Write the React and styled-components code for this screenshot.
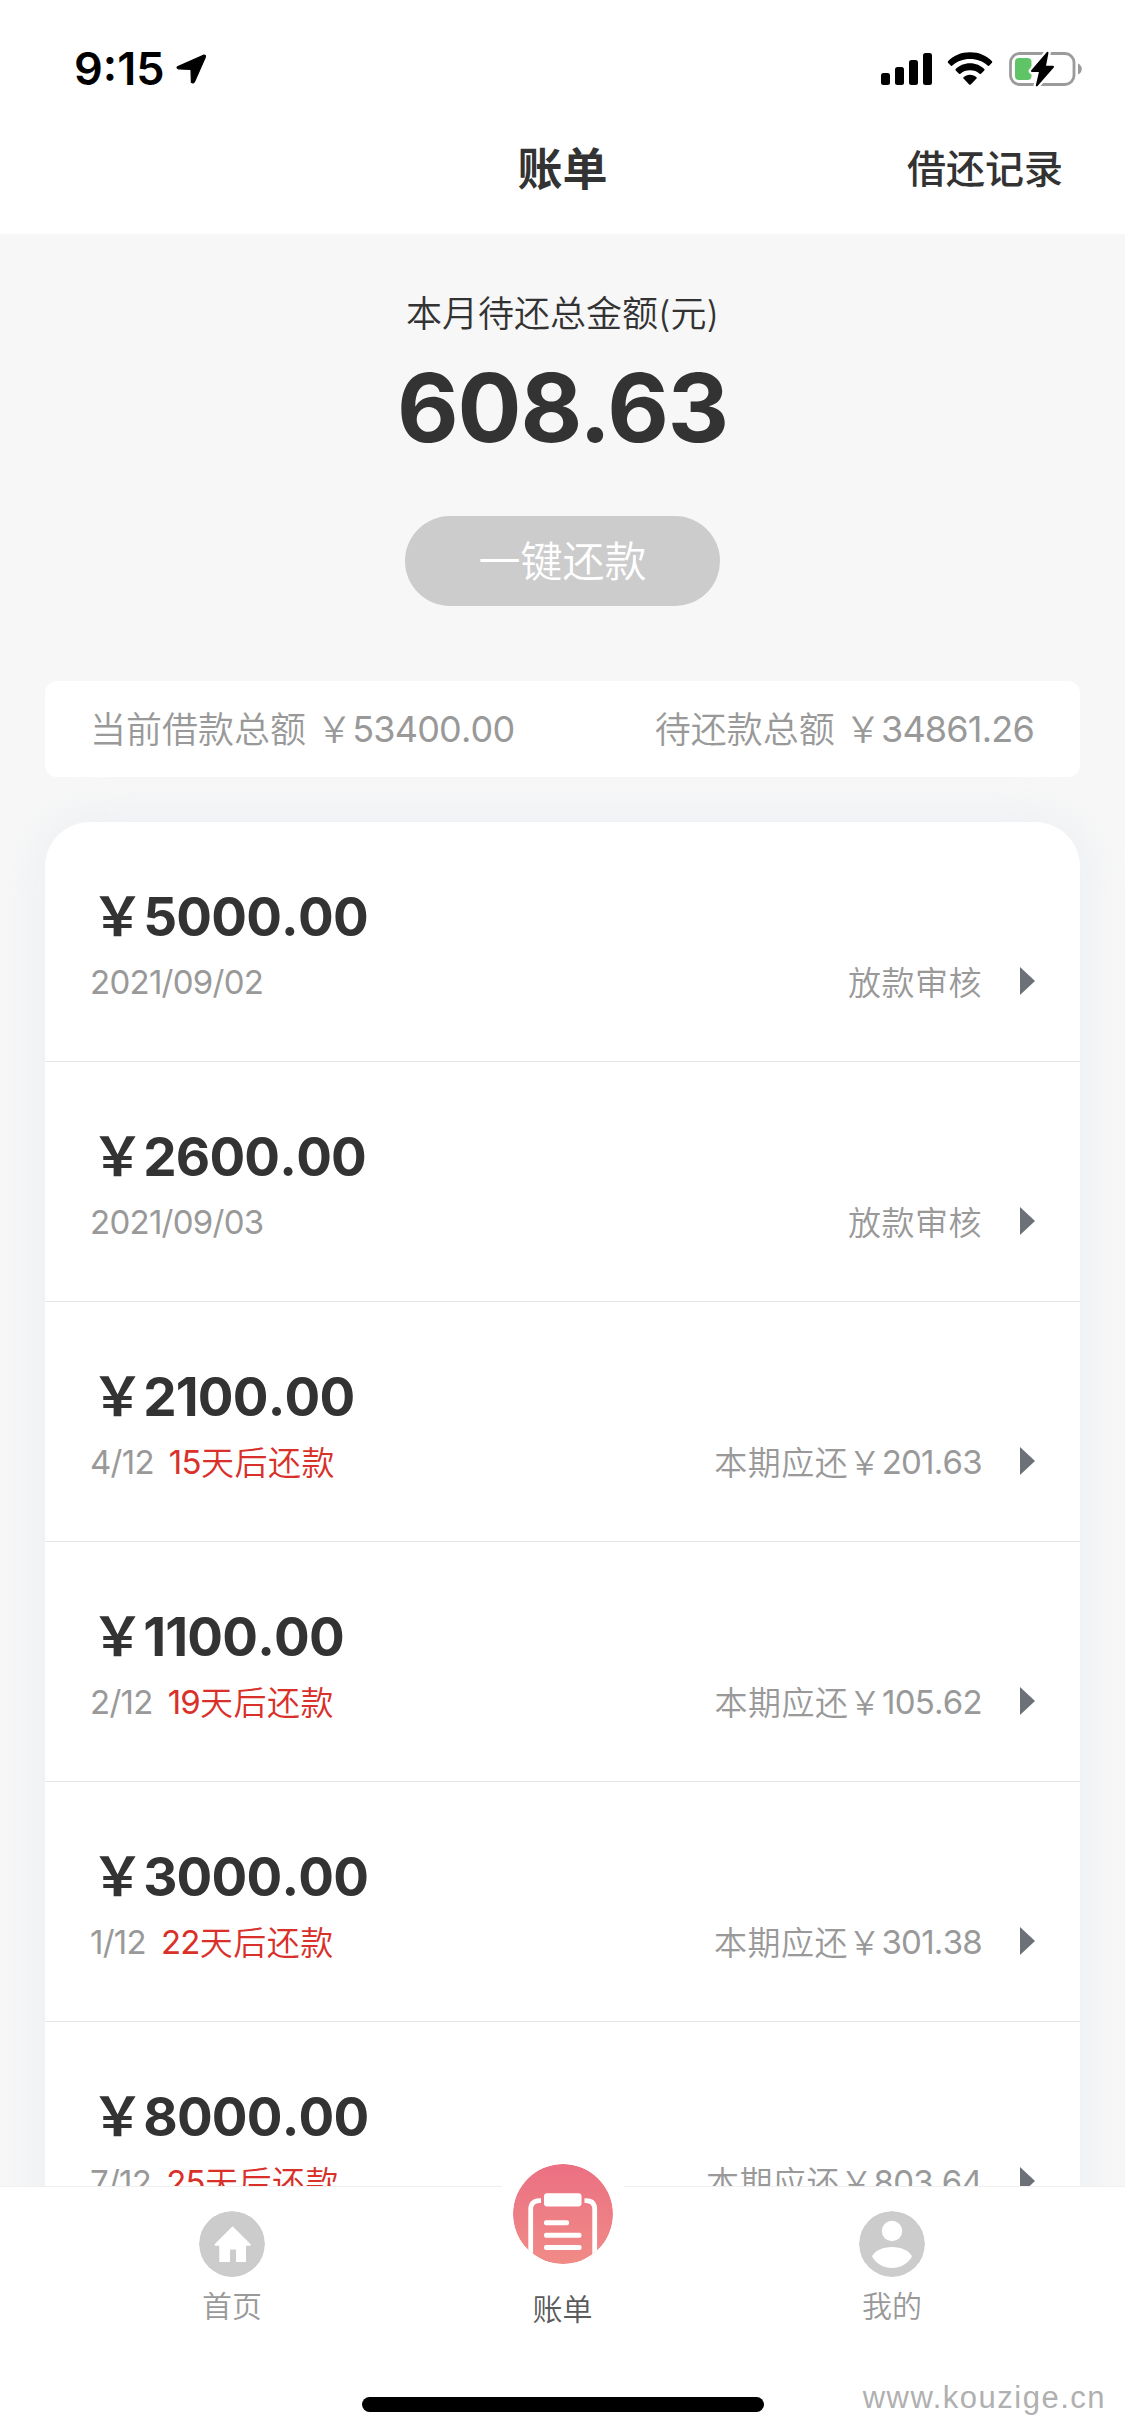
import React from 'react';
import styled, { createGlobalStyle } from 'styled-components';

const GlobalStyle = createGlobalStyle`
  * {
    box-sizing: border-box;
  }

  body {
    margin: 0;
    background: #fff;
    font-family: 'Inter', 'Noto Sans CJK SC', sans-serif;
    font-weight: 350;
    color: #333;
  }
`;

const Screen = styled.div`
  position: relative;
  display: flex;
  flex-direction: column;
  width: 1125px;
  height: 2436px;
  overflow: hidden;
  background: #fff;
`;

const StatusBar = styled.div`
  display: flex;
  justify-content: space-between;
  align-items: center;
  height: 103px;
  padding: 35px 43px 0 74px;
  color: #000;
`;

const StatusGroup = styled.div`
  display: flex;
  align-items: center;
  gap: ${(props) => props.$gap}px;
`;

const Time = styled.span`
  font-size: 45px;
  font-weight: 600;
  line-height: 60px;
`;

const Header = styled.header`
  display: grid;
  grid-template-columns: 1fr auto 1fr;
  align-items: center;
  height: 131px;
  padding: 0 62px;
`;

const Title = styled.h1`
  grid-column: 2;
  margin: 2px 0 0;
  font-size: 45px;
  font-weight: 600;
  line-height: 60px;
`;

const HeaderLink = styled.a`
  justify-self: end;
  font-size: 39px;
  font-weight: 500;
  line-height: 60px;
`;

const Content = styled.main`
  flex: 1;
  min-height: 0;
  overflow: hidden;
  padding: 56px 45px 0;
  background: #f7f7f7;
`;

const Overview = styled.section`
  display: flex;
  flex-direction: column;
  align-items: center;
`;

const OverviewLabel = styled.div`
  font-size: 36px;
  line-height: 48px;
`;

const OverviewAmount = styled.div`
  margin-top: 20px;
  font-size: 95px;
  font-weight: 700;
  line-height: 100px;
  letter-spacing: -1.1px;
`;

const PayButton = styled.button`
  width: 315px;
  height: 90px;
  margin-top: 58px;
  padding: 2px 0 0;
  border: none;
  border-radius: 45px;
  background: #ccc;
  color: #fff;
  font-family: inherit;
  font-size: 42px;
  font-weight: inherit;
  line-height: 88px;
`;

const Summary = styled.div`
  position: relative;
  z-index: 1;
  display: flex;
  justify-content: space-between;
  align-items: center;
  height: 96px;
  margin-top: 75px;
  padding: 2px 46px 0 45px;
  border-radius: 12px;
  background: #fff;
  color: #999;
  font-size: 36px;
  line-height: 48px;
`;

/* Digits sit slightly tighter and higher than the Chinese text around them */
const Num = styled.span`
  position: relative;
  top: -1px;
  font-weight: 400;
  font-kerning: none;
  letter-spacing: -0.022em;
`;

const BillList = styled.div`
  margin-top: 45px;
  border-radius: 45px 45px 0 0;
  background: #fff;
  box-shadow: 0 0 48px rgba(200, 215, 235, 0.3);
`;

const BillRow = styled.div`
  height: 240px;
  padding: 65px 45px 0;
  border-bottom: 1px solid #e6e6e6;
`;

const Amount = styled.div`
  padding-left: 1px;
  font-size: 53px;
  font-weight: 700;
  line-height: 60px;
  font-kerning: none;
  letter-spacing: -0.8px;
`;

const BillDetail = styled.div`
  display: flex;
  align-items: center;
  height: 40px;
  margin-top: 16px;
  color: #999;
  font-size: 33px;
  line-height: 40px;
  letter-spacing: 0.5px;
`;

const DueIn = styled.span`
  margin-left: 15px;
  color: #d9302a;
`;

const BillStatus = styled.span`
  margin-left: auto;
`;

const Arrow = styled.i`
  width: 0;
  height: 0;
  margin: -5px 0 0 38px;
  border-style: solid;
  border-width: 14px 0 14px 15px;
  border-color: transparent transparent transparent #6b7177;
`;

const TabBar = styled.footer`
  position: relative;
  z-index: 2;
  display: flex;
  flex-direction: column;
  justify-content: space-between;
  align-items: center;
  height: 250px;
  padding-bottom: 24px;
  border-top: 1px solid #efefef;
  background: #fff;
`;

const Tabs = styled.nav`
  display: grid;
  grid-template-columns: 329px 332px 327px;
  margin-right: 2px;
`;

const Tab = styled.div`
  display: flex;
  flex-direction: column;
  align-items: center;
  gap: ${(props) => (props.$active ? 24 : 8)}px;
  margin-top: ${(props) => (props.$active ? -23 : 24)}px;
  color: ${(props) => (props.$active ? '#5a5a5a' : '#999')};
  font-size: 30px;
  line-height: 42px;
`;

const TabIcon = styled.svg`
  display: block;
  width: ${(props) => props.$size}px;
  height: ${(props) => props.$size}px;
  border-radius: 50%;
  box-shadow: ${(props) => (props.$raised ? '0 0 0 17px #fff' : 'none')};
`;

const HomeIndicator = styled.div`
  width: 402px;
  height: 15px;
  border-radius: 8px;
  background: #000;
`;

const Watermark = styled.div`
  position: absolute;
  right: 19px;
  bottom: 20px;
  z-index: 3;
  color: #b0b0b0;
  font-family: 'Liberation Sans', sans-serif;
  font-size: 31px;
  line-height: 36px;
  letter-spacing: 1.5px;
`;

const YEN = '\uFFE5';

const bills = [
  { amount: '5000.00', info: '2021/09/02', status: '放款审核' },
  { amount: '2600.00', info: '2021/09/03', status: '放款审核' },
  { amount: '2100.00', info: '4/12', days: 15, status: '本期应还', payment: '201.63' },
  { amount: '1100.00', info: '2/12', days: 19, status: '本期应还', payment: '105.62' },
  { amount: '3000.00', info: '1/12', days: 22, status: '本期应还', payment: '301.38' },
  { amount: '8000.00', info: '7/12', days: 25, status: '本期应还', payment: '803.64' },
];

const LocationIcon = () => (
  <svg width="31" height="30" viewBox="0 0 31 30">
    <path
      d="M2 12.6 27.4 1.2Q30 .6 29.300 3.200L18.600 27.400Q17.200 29.800 15.400 28.200L15 15.400 2.200 14.800Q0 13.800 2 12.600Z"
      fill="#000"
      stroke="#000"
      strokeWidth="1.2"
      strokeLinejoin="round"
    />
  </svg>
);

const SignalIcon = () => (
  <svg width="51" height="34" viewBox="0 0 51 34">
    <rect x="0" y="21" width="9" height="12" rx="2.5" />
    <rect x="14" y="15" width="9" height="18" rx="2.5" />
    <rect x="28" y="8" width="9" height="25" rx="2.5" />
    <rect x="42" y="1" width="9" height="32" rx="2.5" />
  </svg>
);

const WifiIcon = () => (
  <svg width="46" height="34" viewBox="0 0 46 34">
    <path d="M23 0.2C32 .2 39.800 3.600 45 9.200Q45.600 10 45 10.700L42 13.700Q41.300 14.200 40.600 13.600C36 9.200 30 7 23 7S10 9.200 5.400 13.600Q4.700 14.200 4 13.700L1 10.700Q.4 10 1 9.200C6.200 3.600 14 .2 23 .2Z" />
    <path d="M23 11.300C28.800 11.300 33.800 13.500 37.300 17.100Q37.900 17.800 37.300 18.500L34 21.800Q33.300 22.300 32.600 21.700C30.200 19.400 26.800 18.300 23 18.300S15.800 19.400 13.400 21.700Q12.700 22.300 12 21.800L8.700 18.500Q8.100 17.800 8.700 17.100C12.200 13.500 17.200 11.300 23 11.300Z" />
    <path d="M23 22.800C25.500 22.800 27.800 23.700 29.500 25.200Q30.100 25.900 29.500 26.600L23.800 32.500Q23 33.200 22.200 32.500L16.500 26.600Q15.900 25.900 16.500 25.200C18.200 23.700 20.500 22.800 23 22.800Z" />
  </svg>
);

const BOLT = 'M39.5 1.8 24 20H32.200L28.800 34.400 45 15.800H36.800Z';

const BatteryIcon = () => (
  <svg width="74" height="36" viewBox="0 0 74 36">
    <rect x="2.500" y="2.500" width="63.500" height="31" rx="9" fill="none" stroke="#9b9b9b" strokeWidth="2.800" />
    <path d="M70 12.500Q73.800 14.500 73.800 18T70 23.500Z" fill="#9b9b9b" />
    <rect x="7" y="7" width="16.500" height="22" rx="4" fill="#5fc466" />
    <path d={BOLT} fill="#fff" stroke="#fff" strokeWidth="6.500" strokeLinejoin="round" />
    <path d={BOLT} fill="#000" stroke="#000" strokeWidth="2" strokeLinejoin="round" />
  </svg>
);

const HomeIcon = () => (
  <TabIcon $size={66} viewBox="0 0 66 66">
    <circle cx="33" cy="33" r="33" fill="#ccc" />
    <path
      d="M33.600 15.200 51.600 33.200Q52 34.500 51 34.700H47V51H37V39.500Q37 38.500 36 38.500H32Q31 38.500 31 39.500V51H20.300V34.700H16.500Q15 34.500 15.600 33.200Z"
      fill="#fff"
    />
  </TabIcon>
);

const BillIcon = () => (
  <TabIcon $size={100} $raised viewBox="0 0 100 100">
    <defs>
      <linearGradient id="billGradient" x1="0" y1="0" x2="0" y2="1">
        <stop offset="0" stopColor="#eb7082" />
        <stop offset="1" stopColor="#f08b87" />
      </linearGradient>
    </defs>
    <circle cx="50" cy="50" r="50" fill="url(#billGradient)" />
    <path
      d="M28 36.700H26.500Q17.700 36.700 17.700 45.500V100M71.500 36.700H73Q81.700 36.700 81.700 45.500V100"
      fill="none"
      stroke="#fff"
      strokeWidth="4.800"
    />
    <rect x="31" y="29.300" width="37.500" height="13.200" rx="3" fill="#fff" />
    <rect x="31" y="56.300" width="25" height="5" rx="2" fill="#fff" />
    <rect x="31" y="68.700" width="37.500" height="5" rx="2" fill="#fff" />
    <rect x="31" y="81" width="37.500" height="5" rx="2" fill="#fff" />
  </TabIcon>
);

const UserIcon = () => (
  <TabIcon $size={66} viewBox="0 0 66 66">
    <circle cx="33" cy="33" r="33" fill="#ccc" />
    <circle cx="33" cy="20" r="10.200" fill="#fff" />
    <path
      d="M33 36C42 36 49.500 39.500 52.500 44.500Q53 45.500 52.500 46.500C48 53 41 57 33 57S18 53 13.500 46.500Q13 45.500 13.500 44.500C16.500 39.500 24 36 33 36Z"
      fill="#fff"
    />
  </TabIcon>
);

const App = () => {
  return (
    <Screen>
      <GlobalStyle />
      <StatusBar>
        <StatusGroup $gap={12}>
          <Time>9:15</Time>
          <LocationIcon />
        </StatusGroup>
        <StatusGroup $gap={15}>
          <SignalIcon />
          <WifiIcon />
          <BatteryIcon />
        </StatusGroup>
      </StatusBar>
      <Header>
        <Title>账单</Title>
        <HeaderLink>借还记录</HeaderLink>
      </Header>
      <Content>
        <Overview>
          <OverviewLabel>本月待还总金额(元)</OverviewLabel>
          <OverviewAmount>608.63</OverviewAmount>
          <PayButton>一键还款</PayButton>
        </Overview>
        <Summary>
          <span>
            当前借款总额 {YEN}
            <Num>53400.00</Num>
          </span>
          <span>
            待还款总额 {YEN}
            <Num>34861.26</Num>
          </span>
        </Summary>
        <BillList>
          {bills.map((bill) => (
            <BillRow key={bill.amount}>
              <Amount>
                {YEN}
                {bill.amount}
              </Amount>
              <BillDetail>
                <span>
                  <Num>{bill.info}</Num>
                </span>
                {bill.days && (
                  <DueIn>
                    <Num>{bill.days}</Num>
                    天后还款
                  </DueIn>
                )}
                <BillStatus>
                  {bill.status}
                  {bill.payment && YEN}
                  {bill.payment && <Num>{bill.payment}</Num>}
                </BillStatus>
                <Arrow />
              </BillDetail>
            </BillRow>
          ))}
        </BillList>
      </Content>
      <TabBar>
        <Tabs>
          <Tab>
            <HomeIcon />
            首页
          </Tab>
          <Tab $active>
            <BillIcon />
            账单
          </Tab>
          <Tab>
            <UserIcon />
            我的
          </Tab>
        </Tabs>
        <HomeIndicator />
      </TabBar>
      <Watermark>www.kouzige.cn</Watermark>
    </Screen>
  );
};

export default App;
